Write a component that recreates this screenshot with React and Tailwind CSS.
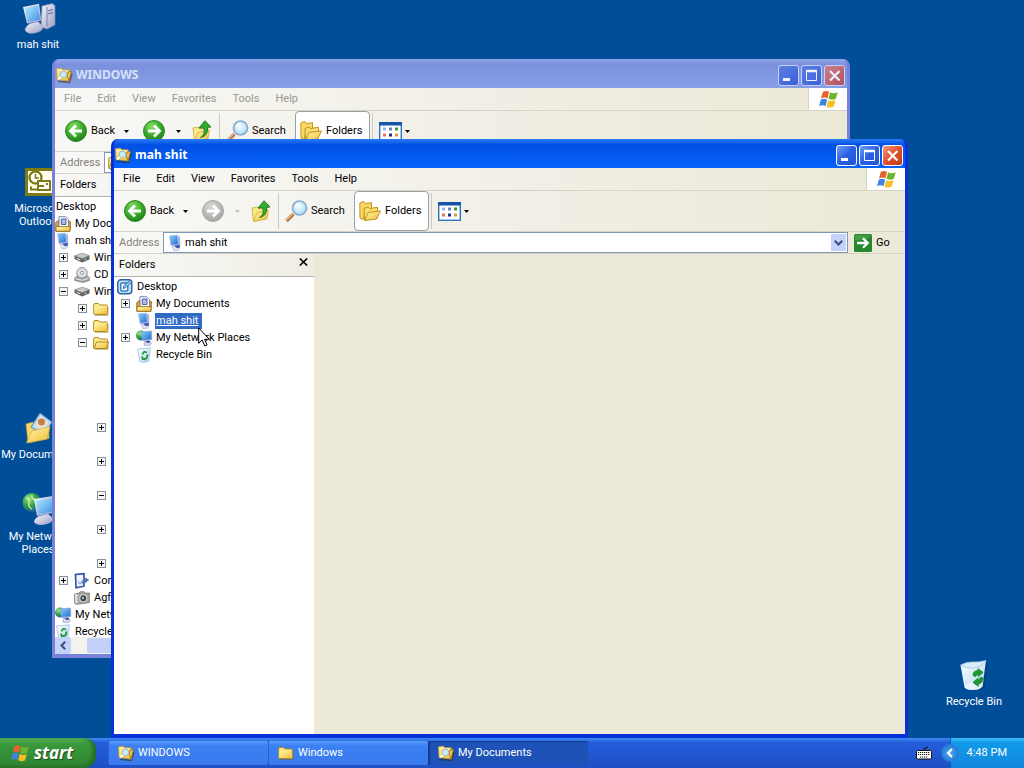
import React from "react";

function Gradients() {
  return (
    <svg className="absolute size-0" aria-hidden="true">
      <defs>
        <radialGradient id="greenBall" cx="0.4" cy="0.3" r="0.75">
          <stop offset="0" stopColor="#8ee06a" />
          <stop offset="0.5" stopColor="#3fae2e" />
          <stop offset="1" stopColor="#1c7d18" />
        </radialGradient>
        <radialGradient id="greyBall" cx="0.4" cy="0.3" r="0.75">
          <stop offset="0" stopColor="#d8d8d6" />
          <stop offset="1" stopColor="#a3a3a1" />
        </radialGradient>
        <radialGradient id="lens" cx="0.45" cy="0.4" r="0.6">
          <stop offset="0" stopColor="#f4fcff" />
          <stop offset="1" stopColor="#a9dcf6" />
        </radialGradient>
        <linearGradient id="folder" x1="0" y1="0" x2="1" y2="1">
          <stop offset="0" stopColor="#fff6a8" />
          <stop offset="1" stopColor="#eebf3a" />
        </linearGradient>
        <linearGradient id="screen" x1="0" y1="0" x2="1" y2="1">
          <stop offset="0" stopColor="#b4ecff" />
          <stop offset="1" stopColor="#3d8fe6" />
        </linearGradient>
        <linearGradient id="smallScreen" x1="0" y1="0" x2="1" y2="1">
          <stop offset="0" stopColor="#86d2fb" />
          <stop offset="1" stopColor="#2468cf" />
        </linearGradient>
        <linearGradient id="grey" x1="0" y1="0" x2="1" y2="1">
          <stop offset="0" stopColor="#f7f7fd" />
          <stop offset="1" stopColor="#9a9cc4" />
        </linearGradient>
        <radialGradient id="globe" cx="0.35" cy="0.3" r="0.8">
          <stop offset="0" stopColor="#9fe87e" />
          <stop offset="0.5" stopColor="#2f9e49" />
          <stop offset="1" stopColor="#1455ad" />
        </radialGradient>
        <linearGradient id="bin" x1="0" y1="0" x2="1" y2="1">
          <stop offset="0" stopColor="#ffffff" />
          <stop offset="0.6" stopColor="#cfe6f7" />
          <stop offset="1" stopColor="#8fbfe6" />
        </linearGradient>
      </defs>
    </svg>
  );
}

function Icon({ size = 16, className = "", children }) {
  return (
    <svg
      width={size}
      height={size}
      viewBox={size === 32 ? "0 0 32 32" : size === 22 ? "0 0 22 22" : "0 0 16 16"}
      className={`shrink-0 overflow-visible ${className}`}
      aria-hidden="true"
    >
      {children}
    </svg>
  );
}

const FlagIcon = ({ className }) => (
  <svg viewBox="0 0 20 18" className={className} aria-hidden="true">
    <path d="M4.500 1.800Q7.500 0 10.500 1.700L9 8Q6 6.300 2.900 8.100Z" fill="#e8622c" />
    <path d="M11.500 2.100Q14.500 3.900 18.800 2L17 8.300Q13.500 10 10 8.400Z" fill="#6fb52c" />
    <path d="M2.600 9.200Q5.600 7.500 8.700 9.200L7.200 15.400Q4 13.700 1 15.500Z" fill="#3f84e0" />
    <path d="M9.700 9.600Q12.800 11.200 16.700 9.500L15.100 15.700Q11.500 17.500 8.200 15.800Z" fill="#f5bf26" />
  </svg>
);

const ExplorerIcon = () => (
  <Icon>
    <path d="M2 14.200l11.500 1.300 2.500-9" fill="none" stroke="#3a2c10" strokeWidth="1.500" opacity=".6" />
    <path d="M.5 1.700l5-.5 1.200 1.600h6.500l.3 11.200L1 12.500z" fill="url(#folder)" stroke="#c2983a" strokeWidth=".8" />
    <path d="M4.500 3.500h6.500v6H4.500z" fill="#fff" opacity=".8" />
    <path d="M13 14l2.600-9.500-3.600.7-.8 3.300z" fill="#efc14c" stroke="#9c6f1a" strokeWidth=".8" />
    <circle cx="7.500" cy="7.500" r="3.400" fill="#c9ebf8" stroke="#9db9b4" />
    <path d="M5 10l-3 2.500" stroke="#fff" strokeWidth="1.700" />
  </Icon>
);

const FolderIcon = ({ open }) => (
  <Icon>
    <path d="M2 14.300h13V6" fill="none" stroke="#7a5a18" opacity=".5" />
    <path d="M.7 3.700q0-1.200 1.200-1.200h3.700l1.400 1.500h6.200q1.200 0 1.200 1.200v7.300q0 1-1 1H1.700q-1 0-1-1z" fill="#fbe88f" stroke="#b58a1c" />
    {open ? (
      <path d="M3.500 7h12l-2 6.500H1.200z" fill="url(#folder)" stroke="#b58a1c" />
    ) : (
      <path d="M1.300 6.200h12.500v6q0 .8-.8.800H2.100q-.8 0-.8-.8z" fill="url(#folder)" />
    )}
  </Icon>
);

const ComputerIcon = () => (
  <Icon>
    <path d="M9.500.8l3.500.7.4 9-3.500 1.500z" fill="#a9b3dd" />
    <path d="M2.500.8l8-.6 1 9.300-7.500.9z" fill="url(#smallScreen)" stroke="#a8c0ee" strokeWidth=".9" />
    <path d="M5 11.200l5-1 3 2.300-1.500 2.800-4.500.5z" fill="#dfe2f4" stroke="#a5aacd" strokeWidth=".6" />
    <path d="M7 10.800l5.500-1 .5 2.700-3 .7z" fill="#4257a8" />
  </Icon>
);

const NetworkIcon = () => (
  <Icon>
    <circle cx="5" cy="5.500" r="5" fill="url(#globe)" />
    <path d="M5 2l10.500-1 .3 8.500-9 1z" fill="url(#smallScreen)" stroke="#8fa9dd" strokeWidth=".9" />
    <path d="M8.500 11.500l4-.8 3 2.300-2 2.700-5.500-.6z" fill="#d6daf0" stroke="#8a90bd" strokeWidth=".6" />
    <path d="M9.500 11.300l4-.8.8 2-3 .6z" fill="#3c529f" />
  </Icon>
);

const DocsIcon = () => (
  <Icon>
    <path d="M.8 6.500l3-2.300v5h8.500v-5l3.200 1.500-.6 9.500H.8z" fill="#e9a93a" stroke="#94641a" strokeWidth=".9" />
    <path d="M4 .7h6.500L13.500 3.500v8H4z" fill="#fff" stroke="#6c7ba8" strokeWidth=".9" />
    <path d="M6.300 3h4.700v5.500H6.300z" fill="#aebde6" stroke="#3f5595" strokeWidth=".9" />
    <path d="M1 10.500h14v4.800H1z" fill="url(#folder)" stroke="#94641a" strokeWidth=".8" />
  </Icon>
);

const DesktopIcon = () => (
  <Icon>
    <rect x=".8" y=".8" width="14" height="14" rx="3" fill="#c4e2f8" stroke="#26619e" strokeWidth="1.400" />
    <rect x="3.800" y="4" width="7" height="8" rx="1" fill="#fff" stroke="#327bbb" strokeWidth="1.400" />
    <path d="M6 9.500l1-3L13.500 1l1.500 1.700-6.500 6z" fill="#8fc8ee" stroke="#1e5a9a" strokeWidth=".8" />
  </Icon>
);

const BinIcon = () => (
  <Icon>
    <path d="M1.500 2l13-1.200-1.800 13.200q-4 2.500-8.700.8z" fill="url(#bin)" stroke="#a3c3e0" strokeWidth=".8" />
    <path d="M6.300 7.200l2-2.500 2.800.8M11.500 7.500l-.8 3.500-1.700 1H6.800L6 9.500" fill="none" stroke="#219a3a" strokeWidth="1.800" />
  </Icon>
);

const DriveIcon = () => (
  <Icon>
    <path d="M.5 6l8-2.500 7 2.300v3.700l-7.500 3L.5 9z" fill="#666" />
    <path d="M.5 5.700l8-2.400 7 2.300-7.300 3z" fill="#c9c9c9" stroke="#858585" strokeWidth=".6" />
    <path d="M3 8.500l3 1.200" stroke="#ddd" strokeWidth="1.200" />
    <circle cx="11.500" cy="9.300" r=".8" fill="#b6e08a" />
  </Icon>
);

const CdIcon = () => (
  <Icon>
    <path d="M.7 11l3-2.500h9.500l2.300 2.500v2.500L9 15.500.7 13.500z" fill="#a0a0a0" stroke="#6b6b6b" strokeWidth=".6" />
    <circle cx="8" cy="5.800" r="5.300" fill="#dcdce2" stroke="#8a8a92" strokeWidth=".9" />
    <circle cx="8" cy="5.800" r="1.500" fill="#fff" stroke="#888" strokeWidth=".8" />
    <path d="M1.500 11.800l7 1.500 6-2" fill="none" stroke="#eee" />
  </Icon>
);

const ControlIcon = () => (
  <Icon>
    <path d="M1.500 1.500l8.500-.8v12.500l-8 1.600z" fill="#eef4ff" stroke="#2d4f9c" strokeWidth="1.600" />
    <path d="M4 8.500l2 2.500 3.500-5" fill="none" stroke="#7aa3e0" strokeWidth="1.200" />
    <path d="M8 10l6.500-3.500M12 5v4.500" stroke="#4568a8" strokeWidth="1.700" />
  </Icon>
);

const CameraIcon = () => (
  <Icon>
    <path d="M.7 4l4-.7 1.500-1.500h4l1 1.500L15.300 3v9.500L2 14.300.7 13z" fill="#a9a9a4" stroke="#6a6a66" strokeWidth=".8" />
    <path d="M1 4h2.500v9.700L1 12.500z" fill="#ddd" />
    <circle cx="9.300" cy="8.300" r="3.600" fill="#444" stroke="#e2e2e2" />
    <circle cx="9" cy="8" r="1.300" fill="#9fb2bd" />
  </Icon>
);

const BallArrow = ({ dir, grey }) => (
  <Icon size={22}>
    <circle cx="11" cy="11" r="10.500" fill={grey ? "url(#greyBall)" : "url(#greenBall)"} stroke={grey ? "#a5a5a3" : "#2c8a22"} />
    <path
      d={dir === "left" ? "M17 11H6.500M11 5.500L5.500 11l5.500 5.500" : "M5 11h10.500M11 5.500l5.500 5.500-5.500 5.500"}
      fill="none"
      stroke="#fff"
      strokeWidth="2.800"
    />
  </Icon>
);

const UpIcon = () => (
  <Icon size={22}>
    <path d="M2 8l5-1 1 1.500 9-1v11L3.500 21.500z" fill="#f9e88a" stroke="#d8b64c" />
    <path d="M3.500 21.300L7 12.500l11.500-2-2 8.500z" fill="url(#folder)" stroke="#d8b64c" />
    <path d="M9.500 17.500q5-2.500 3.300-9.500H8L14 .7l6 6.300-3.500.4q1 8.500-7 10.100z" fill="#34ac32" stroke="#187a1c" strokeWidth=".9" />
  </Icon>
);

const SearchIcon = () => (
  <Icon size={22}>
    <path d="M8.500 14L1.500 21" stroke="#b87745" strokeWidth="3.600" />
    <path d="M8 13.500L1 20.300" stroke="#e8b88c" strokeWidth="1.200" />
    <circle cx="14.500" cy="8" r="7" fill="url(#lens)" stroke="#8eadce" strokeWidth="1.700" />
    <path d="M10.500 7q1-3 4-3.500" stroke="#fff" strokeWidth="1.500" fill="none" />
  </Icon>
);

const FoldersIcon = () => (
  <Icon size={22}>
    <path d="M.8 3l4-1.500L6.500 3.500l6-.8v6L6 11l-2 8.500-3-1.500z" fill="#f7d964" stroke="#c4931c" />
    <path d="M5 8.500L9 7l1.500 1.500 8-1.200v10.700L5.500 20.500z" fill="#f7dc70" stroke="#c4931c" />
    <path d="M5.700 20.400l3.500-8 12.300-1.400-4 8z" fill="url(#folder)" stroke="#c4931c" />
  </Icon>
);

const ViewsIcon = () => (
  <svg viewBox="0 0 23 19" className="h-[19px] w-[23px] shrink-0" aria-hidden="true">
    <rect x=".7" y=".7" width="21.600" height="17.600" fill="#fff" stroke="#2877bf" strokeWidth="1.400" />
    <rect x="0" y="0" width="23" height="3.500" fill="#1455a8" />
    <path d="M4 5.500h3v3H4z" fill="#9ab2ee" />
    <path d="M10 5.500h3v3h-3z" fill="#6b7fd2" />
    <path d="M16 5.500h3v3h-3z" fill="#3b9a34" />
    <path d="M4 11.500h3v3H4z" fill="#e6755c" />
    <path d="M10 11.500h3v3h-3z" fill="#14328f" />
    <path d="M16 11.500h3v3h-3z" fill="#d99b3e" />
  </svg>
);

const Caret = ({ className = "fill-black" }) => (
  <svg viewBox="0 0 5 3" className={`h-[3px] w-[5px] ${className}`} aria-hidden="true">
    <path d="M0 0h5L2.500 3z" />
  </svg>
);

function CaptionButton({ label, active, close, children }) {
  const colour = close
    ? active
      ? "bg-linear-to-br from-[#f0997c] via-[#e04f2b] to-[#c23a17]"
      : "bg-linear-to-br from-[#c9808c] to-[#b2525c]"
    : active
      ? "bg-linear-to-br from-[#6f9df5] via-[#2c5fe0] to-[#2256d8]"
      : "bg-linear-to-br from-[#5d80e4] to-[#3a5fd8]";
  return (
    <button
      aria-label={label}
      className={`flex size-[21px] items-center justify-center rounded-[3px] border ${active ? "border-white" : "border-[#c4d0f5]"} ${colour}`}
    >
      <svg viewBox="0 0 19 19" className="size-[19px]" fill="none" stroke={active ? "#fff" : "#eef1fd"} aria-hidden="true">
        {children}
      </svg>
    </button>
  );
}

function ToolButton({ children, className = "", ...rest }) {
  return (
    <button className={`flex h-full items-center ${className}`} {...rest}>
      {children}
    </button>
  );
}

function ExplorerWindow({ title, active, className, addressIcon, scrolled, children }) {
  const bar = "bg-linear-to-r from-[#f8f8f6] via-[#f1efe6] to-[#ece9d8]";
  return (
    <section
      aria-label={title}
      className={`absolute flex flex-col overflow-hidden rounded-t-[7px] border-x-[3px] border-b-4 ${active ? "border-[#0831d9] bg-[#0831d9]" : "border-[#7a82d8] bg-[#7a82d8]"} ${className}`}
    >
      <header
        className={`-mx-[3px] flex h-[29px] shrink-0 items-center gap-1 rounded-t-[7px] pt-[3px] pr-[5px] pl-1 ${
          active
            ? "bg-linear-to-b from-[#2a7bf5] via-[#0350e4] via-20% to-[#0462fb]"
            : "bg-linear-to-b from-[#8fa6ec] via-[#7a90dc] via-20% to-[#879fe6]"
        }`}
      >
        <ExplorerIcon />
        <h2
          className={`grow font-['Noto_Sans','Open_Sans',sans-serif] text-[12px] leading-4 font-bold ${active ? "text-white" : "text-[#d6e2f9]"}`}
        >
          {title}
        </h2>
        <div className="flex gap-0.5">
          <CaptionButton label="Minimize" active={active}>
            <path d="M4 13.500h7" strokeWidth="3" />
          </CaptionButton>
          <CaptionButton label="Maximize" active={active}>
            <path d="M4.500 4.500h10v10h-10z" />
            <path d="M4 5h11" strokeWidth="2.500" />
          </CaptionButton>
          <CaptionButton label="Close" active={active} close>
            <path d="M5 5l9.500 9.500M14.500 5L5 14.500" strokeWidth="2.200" />
          </CaptionButton>
        </div>
      </header>

      <nav className={`flex h-[23px] shrink-0 border-b border-[#d6d3c4] ${bar}`}>
        <div className={`flex grow items-center px-px ${active ? "text-black" : "text-[#9a998f]"}`}>
          {["File", "Edit", "View", "Favorites", "Tools", "Help"].map((m) => (
            <button key={m} className="px-2">
              {m}
            </button>
          ))}
        </div>
        <div className="flex w-[39px] items-center justify-center border-l border-[#d6d3c4] bg-white">
          <FlagIcon className="h-[19px] w-[21px]" />
        </div>
      </nav>

      <div className={`flex h-10 shrink-0 items-center pl-2.5 ${bar}`}>
        <ToolButton className="w-[51px] gap-1">
          <BallArrow dir="left" />
          Back
        </ToolButton>
        <ToolButton className="w-[27px] justify-center pr-1.5" aria-label="Back history">
          <Caret />
        </ToolButton>
        <ToolButton aria-label="Forward">
          <BallArrow dir="right" grey={active} />
        </ToolButton>
        <ToolButton className="w-[26px] justify-center" aria-label="Forward history">
          <Caret className={active ? "fill-[#c3c1b8]" : "fill-black"} />
        </ToolButton>
        <ToolButton aria-label="Up">
          <UpIcon />
        </ToolButton>
        <span className="mx-1.5 h-9 w-px bg-[#cfccbf]" />
        <ToolButton className="w-[69px] gap-1">
          <SearchIcon />
          Search
        </ToolButton>
        <ToolButton className="h-[38px] w-[75px] gap-1 rounded border border-[#98a0a8] bg-white pl-1" aria-pressed="true">
          <FoldersIcon />
          Folders
        </ToolButton>
        <span className="mr-1.5 ml-0.5 h-9 w-px bg-[#cfccbf]" />
        <ToolButton className="gap-[3px]" aria-label="Views">
          <ViewsIcon />
          <Caret />
        </ToolButton>
      </div>

      <form className={`flex h-[23px] shrink-0 items-center border-y border-[#d6d3c4] pl-[5px] ${bar}`}>
        <label htmlFor={`address-${title}`} className="w-11 text-[#84827a]">
          Address
        </label>
        <div className="flex h-[21px] grow items-center border border-[#8296b4] bg-white pr-px pl-[3px]">
          {addressIcon}
          <input
            id={`address-${title}`}
            defaultValue={title}
            className="ml-0.5 min-w-0 grow bg-transparent outline-none"
          />
          <button type="button" aria-label="Show addresses" className="flex h-[17px] w-[15px] items-center justify-center bg-[#c3d3fb]">
            <svg viewBox="0 0 9 6" className="h-1.5 w-[9px]" fill="none" stroke="#3d4c78" strokeWidth="2" aria-hidden="true">
              <path d="M.8.800l3.700 3.700L8.200.800" />
            </svg>
          </button>
        </div>
        <button type="button" className="ml-1.5 flex w-[51px] items-center gap-1">
          <svg viewBox="0 0 18 18" className="size-[18px] shrink-0" aria-hidden="true">
            <rect width="18" height="18" rx="1.500" fill="#26872e" />
            <path d="M1 1h16l-5 5H1z" fill="#58ac55" opacity=".6" />
            <path d="M3 9h10.500M9 4.300L13.700 9 9 13.700" fill="none" stroke="#fff" strokeWidth="2.300" />
          </svg>
          Go
        </button>
      </form>

      <div className="flex min-h-0 grow bg-[#ece9d8]">
        <aside className="flex w-[200px] shrink-0 flex-col bg-white">
          <div className="flex h-[23px] shrink-0 items-center justify-between border-b border-[#b5b3a8] bg-linear-to-r from-[#f8f8f6] to-[#efede3] pr-1.5 pl-[5px]">
            <h3>Folders</h3>
            <button aria-label="Close folders" className="pb-1.5">
              <svg viewBox="0 0 9 8" className="h-2 w-[9px]" stroke="#000" strokeWidth="1.600" aria-hidden="true">
                <path d="M.8.500l7.400 7M8.200.500l-7.400 7" />
              </svg>
            </button>
          </div>
          <div className="min-h-0 grow overflow-hidden pt-px">
            <div role="tree" className={scrolled ? "-ml-[22px]" : ""}>
              {children}
            </div>
          </div>
          {scrolled && (
            <div className="flex h-[17px] shrink-0 bg-[#f3f2ec]">
              <button aria-label="Scroll left" className="flex w-4 items-center justify-center rounded-xs bg-[#c3d3fb]">
                <svg viewBox="0 0 6 9" className="h-[9px] w-1.5" fill="none" stroke="#3d4c78" strokeWidth="2" aria-hidden="true">
                  <path d="M5.200.800L1.500 4.500l3.700 3.700" />
                </svg>
              </button>
              <div className="my-px ml-4 w-24 rounded-xs bg-[#c3d0f8]" />
            </div>
          )}
        </aside>
      </div>
    </section>
  );
}

const indents = ["pl-[3px]", "pl-[7px]", "pl-[26px]", "pl-[45px]", "pl-[64px]"];

function TreeRow({ level = 0, sign, icon, label, selected }) {
  return (
    <div role="treeitem" aria-selected={!!selected} className={`flex h-[17px] items-center gap-[3px] whitespace-nowrap ${indents[level]}`}>
      {level > 0 &&
        (sign ? (
          <button
            aria-label={sign === "+" ? "Expand" : "Collapse"}
            className="mr-[3px] flex size-[9px] shrink-0 items-center justify-center border border-[#8391a5] bg-[#f6f5f1]"
          >
            <svg viewBox="0 0 5 5" className="size-[5px]" stroke="#000" aria-hidden="true">
              <path d={sign === "+" ? "M0 2.500h5M2.500 0v5" : "M0 2.500h5"} />
            </svg>
          </button>
        ) : (
          <span className="mr-[3px] w-[9px] shrink-0" />
        ))}
      {icon}
      <span className={selected ? "bg-[#316ac5] pr-1 pl-px leading-4 text-white underline" : "pl-px"}>{label}</span>
    </div>
  );
}

function Shortcut({ label, className, children }) {
  return (
    <button className={`absolute flex w-[76px] flex-col items-center gap-[3px] text-center leading-[13px] text-white ${className}`}>
      <Icon size={32}>{children}</Icon>
      {label}
    </button>
  );
}

function TaskButton({ icon, label, active }) {
  return (
    <button
      className={`flex h-6 w-40 min-w-0 items-center gap-1 rounded-xs border-l pl-[9px] text-white ${
        active
          ? "border-[#123a94] bg-[#1e52b7] shadow-[inset_1px_1px_1px_#123a94]"
          : "border-[#2a61d6] bg-linear-to-b from-[#5a9af9] via-[#3c80f2] via-20% to-[#3a7bee]"
      }`}
    >
      {icon}
      {label}
    </button>
  );
}

export default function App() {
  return (
    <div className="relative flex h-screen flex-col overflow-hidden bg-[#004e98] font-['Roboto','Liberation_Sans',sans-serif] text-[11px] leading-[14px] select-none">
      <Gradients />
      <main className="relative grow">
        <Shortcut label="mah shit" className="top-[3px] left-0">
          <path d="M20 3l10-2.500 3 2V22l-8 4-6-2z" fill="url(#grey)" stroke="#7e83b5" strokeWidth=".7" />
          <path d="M25 4v20" stroke="#7e83b5" />
          <path d="M26 8l5-1.500M26 11l5-1.500" stroke="#5c6397" />
          <path d="M1 4L17 .8l2.500 17L5 20.500z" fill="url(#grey)" />
          <path d="M2.800 5.200L15.800 2.600 18 16.500 6 19z" fill="url(#screen)" />
          <path d="M8 20.500l8-2 5 5q0 5-8 6.500t-10-3q0-3 5-6.500z" fill="url(#grey)" stroke="#8e93be" strokeWidth=".5" />
        </Shortcut>
        <Shortcut label="Microsoft Outlook" className="top-[167px] left-0">
          <rect x="3" y="1" width="29" height="28" fill="#7d7c14" />
          <rect x="6" y="4" width="24" height="22" fill="#fffef0" />
          <circle cx="13.500" cy="10.500" r="6" fill="#fff" stroke="#7d7c14" strokeWidth="2.300" />
          <path d="M13.500 7v4h3.500" fill="none" stroke="#7d7c14" strokeWidth="1.600" />
          <rect x="16" y="14" width="12" height="9" fill="#fff" stroke="#7d7c14" strokeWidth="2" />
          <path d="M16 19h6M24 17h2M9 19.500v3h6" stroke="#7d7c14" strokeWidth="2" fill="none" />
        </Shortcut>
        <Shortcut label="My Documents" className="top-[413px] left-0">
          <path d="M4 11l7-2 3 2 13-2.500v17L6 30z" fill="#f4d56a" stroke="#c39a32" strokeWidth=".7" />
          <path d="M18 0l12 9-8 13-13-8z" fill="#b6d8f4" stroke="#5b83b8" />
          <path d="M18.500 3l8 6.500-6 8.500-8-5.500z" fill="#e9e3d2" />
          <circle cx="19.500" cy="9" r="3.500" fill="#c77b45" />
          <path d="M4.500 29.800L10 18l18-4.500L25 26z" fill="url(#folder)" stroke="#d3ab40" strokeWidth=".7" />
        </Shortcut>
        <Shortcut label="My Network Places" className="top-[495px] left-0">
          <circle cx="10" cy="7.500" r="9.500" fill="url(#globe)" />
          <path d="M4 3q4 1 3 5t3 6M10 0q-1 4 4 5" stroke="#c8f0a8" strokeWidth="1.300" fill="none" />
          <path d="M12 4l19-3v17l-16 3z" fill="url(#grey)" />
          <path d="M13.800 5.500L31 3v13.500L16.300 19.500z" fill="url(#screen)" />
          <path d="M17 21l9-2 5 4q0 5-8 6.500t-11-2.500q0-3 5-6z" fill="url(#grey)" />
        </Shortcut>
        <Shortcut label="Recycle Bin" className="right-3 bottom-[30px]">
          <path d="M28 2l1.500 1-3 24.500-6 3z" fill="#003769" opacity=".5" />
          <path d="M2.500 5q5 1.500 12-.5T28 .5l-3.500 26q-3 3.500-10 3.500-6 0-8-2.500z" fill="url(#bin)" />
          <path d="M2.500 5q6-3.500 12-3T28 .5q-5 7-13 7.500T2.500 5z" fill="#d9eefa" stroke="#9cc4e2" strokeWidth=".7" />
          <path d="M6.500 27q8-8 19-7l-1 6.500q-3 3.500-10 3.500-6 0-8-3z" fill="#fff" opacity=".6" />
          <path d="M15 15.500q0-5 5.500-5l-.5-2 5 4-4.700 4-.2-2q-2-.2-2.500 2zM25 18q0 5.500-5 6l.4 2.200-5.500-3.700 5-4.200v2q2-.3 2.500-3z" fill="#1f9433" stroke="#1f9433" />
        </Shortcut>

        <ExplorerWindow
          title="WINDOWS"
          scrolled
          className="top-[59px] left-[52px] h-[599px] w-[798px]"
          addressIcon={<FolderIcon open />}
        >
          <TreeRow icon={<DesktopIcon />} label="Desktop" />
          <TreeRow level={1} sign="+" icon={<DocsIcon />} label="My Documents" />
          <TreeRow level={1} sign="-" icon={<ComputerIcon />} label="mah shit" />
          <TreeRow level={2} sign="+" icon={<DriveIcon />} label="Windows" />
          <TreeRow level={2} sign="+" icon={<CdIcon />} label="CD Drive" />
          <TreeRow level={2} sign="-" icon={<DriveIcon />} label="Windows" />
          <TreeRow level={3} sign="+" icon={<FolderIcon />} />
          <TreeRow level={3} sign="+" icon={<FolderIcon />} />
          <TreeRow level={3} sign="-" icon={<FolderIcon open />} />
          {[0, 0, 0, 0, "+", 0, "+", 0, "-", 0, "+", 0, "+"].map((sign, i) => (
            <TreeRow key={i} level={4} sign={sign} />
          ))}
          <TreeRow level={2} sign="+" icon={<ControlIcon />} label="Control Panel" />
          <TreeRow level={2} icon={<CameraIcon />} label="Agfa" />
          <TreeRow level={1} sign="+" icon={<NetworkIcon />} label="My Network Places" />
          <TreeRow level={1} icon={<BinIcon />} label="Recycle Bin" />
        </ExplorerWindow>

        <ExplorerWindow
          title="mah shit"
          active
          className="top-[139px] left-[111px] h-[599px] w-[797px]"
          addressIcon={<ComputerIcon />}
        >
          <TreeRow icon={<DesktopIcon />} label="Desktop" />
          <TreeRow level={1} sign="+" icon={<DocsIcon />} label="My Documents" />
          <TreeRow level={1} icon={<ComputerIcon />} label="mah shit" selected />
          <TreeRow level={1} sign="+" icon={<NetworkIcon />} label="My Network Places" />
          <TreeRow level={1} icon={<BinIcon />} label="Recycle Bin" />
        </ExplorerWindow>

        <svg viewBox="0 0 12 20" className="pointer-events-none absolute top-[327px] left-[198px] h-5 w-3" aria-hidden="true">
          <path d="M.7.900v15.400l3.500-3.300 2.600 6 2.300-1-2.500-5.700h4.700z" fill="#fff" stroke="#000" />
        </svg>
      </main>

      <footer className="flex h-[30px] shrink-0 bg-linear-to-b from-[#3f8cf3] via-[#245edb] via-15% to-[#1f4fc4]">
        <button className="mr-3 flex w-24 items-center gap-1 rounded-r-xl bg-linear-to-b from-[#5cb35c] via-[#3a9a3c] via-20% to-[#2f8330] pl-2.5 font-['Noto_Sans','Open_Sans',sans-serif] text-[17px] leading-6 font-bold text-white italic shadow-[inset_-3px_-1px_4px_#1f6a22] [text-shadow:1px_1px_1px_#1c4a1c]">
          <FlagIcon className="h-[19px] w-5" />
          start
        </button>
        <div className="flex grow items-center">
          <TaskButton icon={<ExplorerIcon />} label="WINDOWS" />
          <TaskButton icon={<FolderIcon />} label="Windows" />
          <TaskButton icon={<ExplorerIcon />} label="My Documents" active />
        </div>
        <button aria-label="Keyboard" className="mr-[18px]">
          <svg viewBox="0 0 16 14" className="h-3.5 w-4" aria-hidden="true">
            <path d="M8 4V2.500l3-.5.500-1.500" fill="none" stroke="#111" />
            <rect x=".5" y="4.500" width="15" height="8.500" rx="1" fill="#fff" stroke="#111" />
            <path d="M2 6.500h12M2 8.500h12M4 11h8" stroke="#111" strokeDasharray="1.200 .8" strokeWidth="1.200" />
          </svg>
        </button>
        <div className="flex items-center border-l border-[#0d5cc0] bg-linear-to-b from-[#3fc0f8] via-[#129bea] via-15% to-[#1186de] pr-[17px]">
          <button aria-label="Show hidden icons" className="-ml-2.5 flex size-[18px] items-center justify-center rounded-full bg-radial from-[#4aa8f2] to-[#1166c8]">
            <svg viewBox="0 0 8 10" className="h-2.5 w-2" fill="none" stroke="#fff" strokeWidth="2.200" aria-hidden="true">
              <path d="M6 1L2 5l4 4" />
            </svg>
          </button>
          <time className="ml-2 whitespace-nowrap text-white">4:48 PM</time>
        </div>
      </footer>
    </div>
  );
}
